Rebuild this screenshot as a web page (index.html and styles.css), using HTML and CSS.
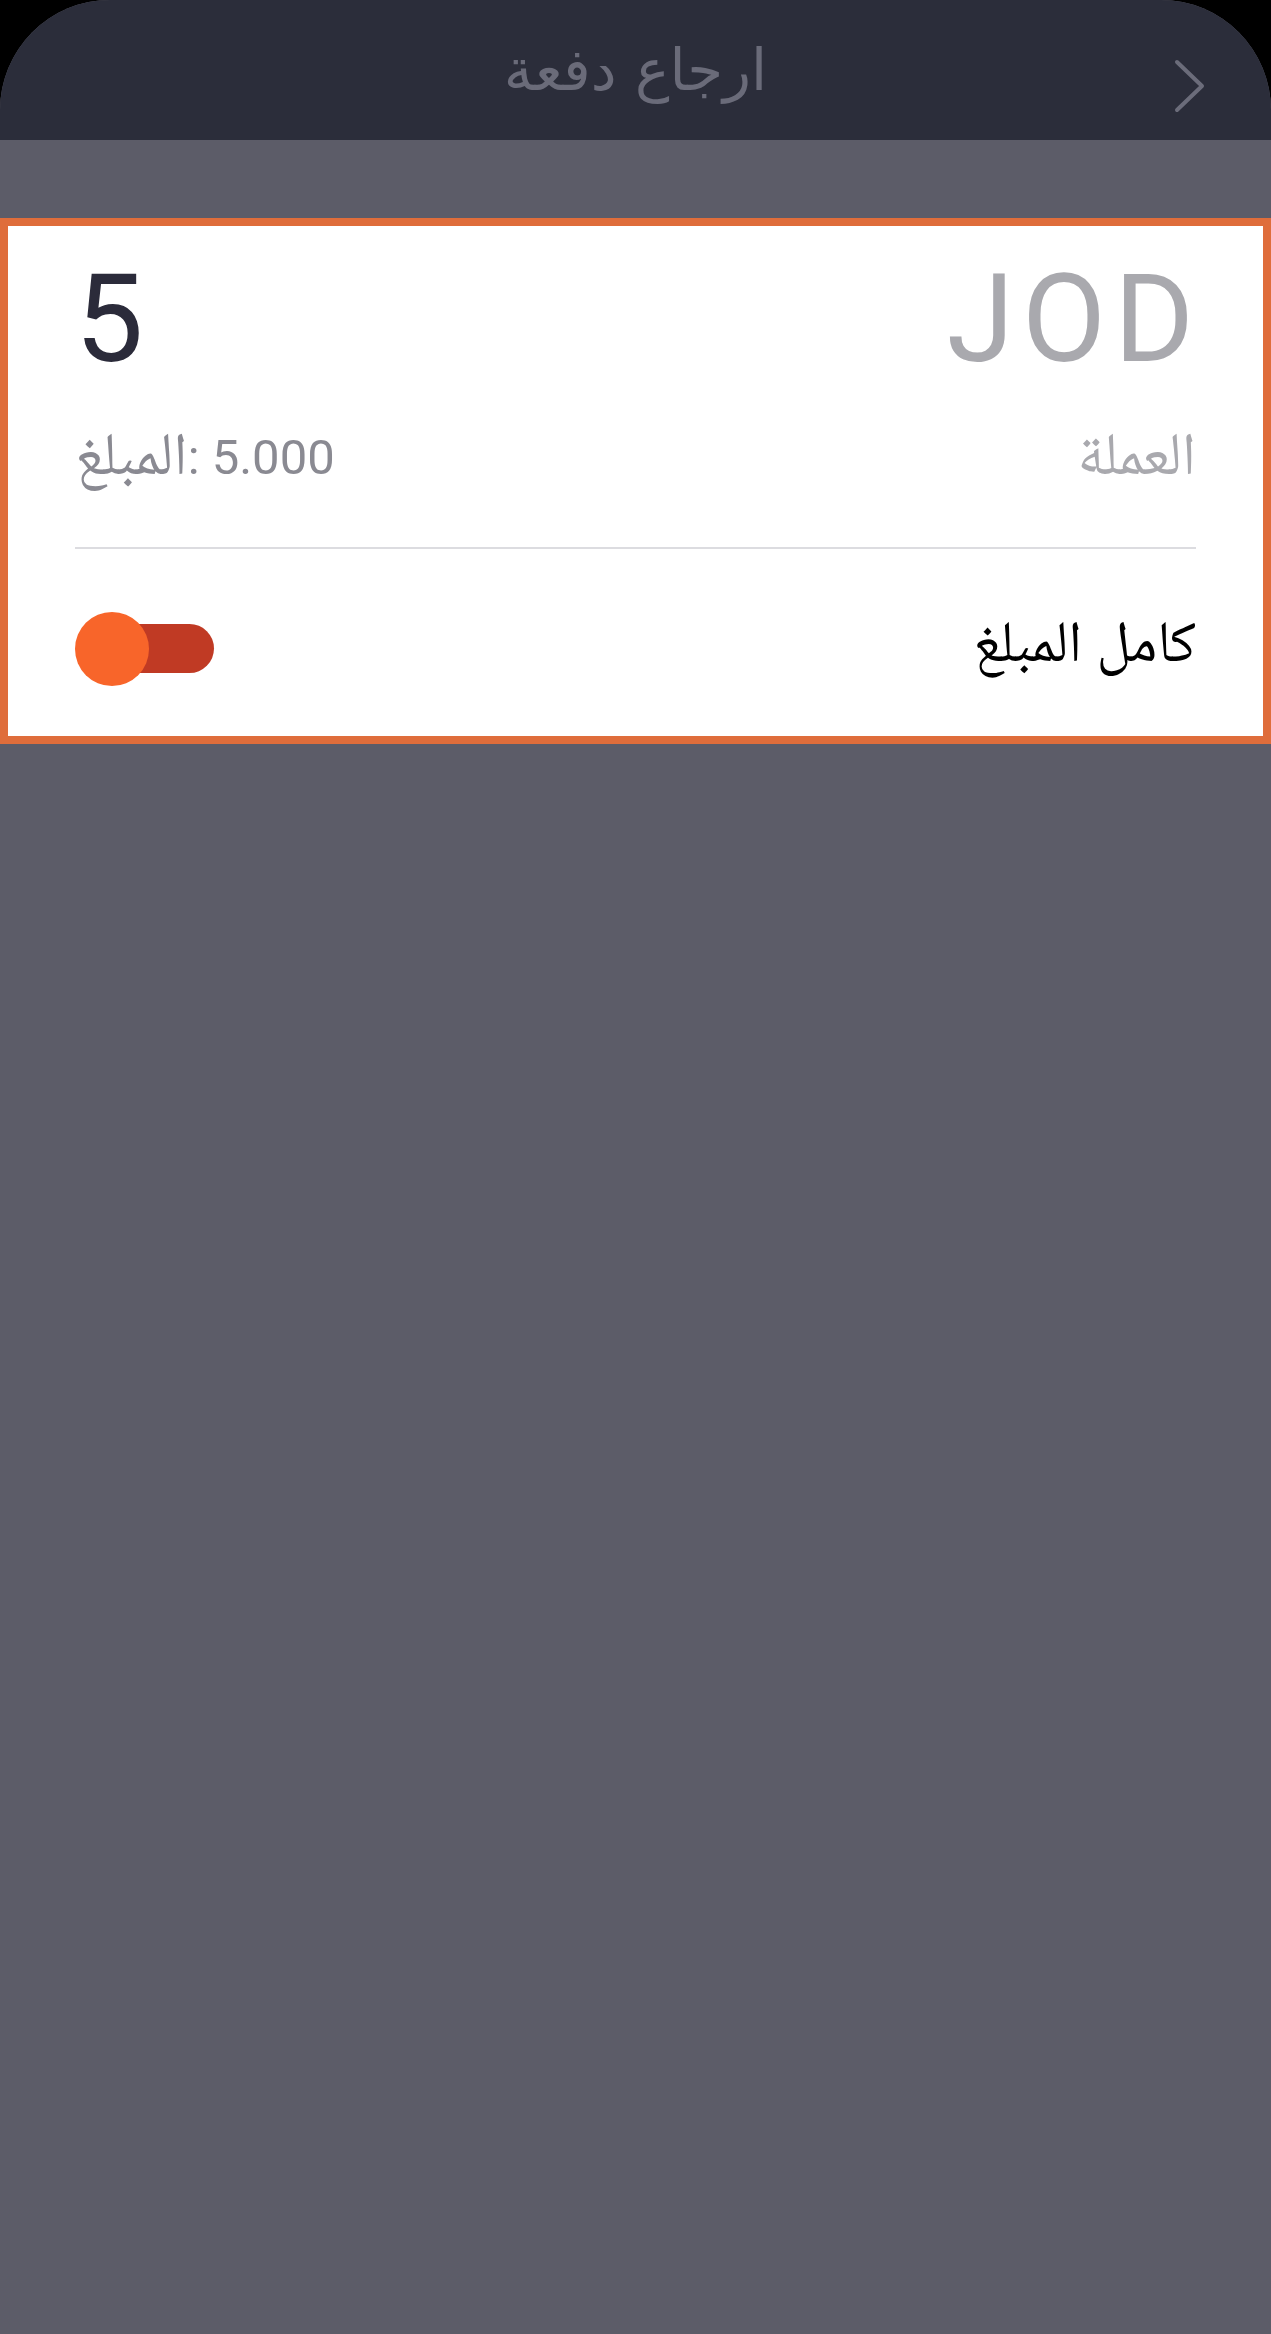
FILE: index.html
```html
<!DOCTYPE html>
<html dir="rtl" lang="ar">
<head>
    <title>ارجاع دفعة</title>
    <meta name="viewport" content="width=device-width, initial-scale=1.0">
    <link rel="stylesheet" href="styles.css">
</head>
<body>
    <div class="screen">
        <header class="top-bar">
            <h1 class="top-title">ارجاع دفعة</h1>
            <a class="back-button" href="#">
                <svg width="40" height="60" viewBox="0 0 40 60">
                    <path d="M8 7 L33 31 L8 55" fill="none" stroke="#6b6c7a" stroke-width="4" stroke-linecap="round" stroke-linejoin="round"/>
                </svg>
            </a>
        </header>

        <section class="refund-card">
            <div class="amount-row">
                <span class="currency">JOD</span>
                <span class="amount">5</span>
            </div>
            <div class="info-row">
                <span class="currency-label">العملة</span>
                <span class="amount-label">
                    <span class="amount-word">المبلغ</span>
                    <span class="amount-value">: 5.000</span>
                </span>
            </div>
            <div class="toggle-row">
                <span class="toggle-label">كامل المبلغ</span>
                <span class="toggle">
                    <span class="toggle-track"></span>
                    <span class="toggle-knob"></span>
                </span>
            </div>
        </section>
    </div>
</body>
</html>
```

FILE: styles.css
```css
html, body {
    margin: 0;
    padding: 0;
    background: #000;
}

body {
    font-family: Roboto, "Noto Naskh Arabic", "DejaVu Sans", sans-serif;
}

.screen {
    min-height: 2334px;
    background: #5c5c68;
    border-radius: 110px 110px 0 0;
    overflow: hidden;
}

.top-bar {
    position: relative;
    height: 140px;
    background: #2b2d3a;
    display: flex;
    align-items: center;
    justify-content: center;
}

.top-title {
    margin: 0;
    font-family: "DejaVu Sans", sans-serif;
    font-weight: normal;
    font-size: 58px;
    line-height: 1;
    color: #6a6b79;
}

.back-button {
    position: absolute;
    right: 62px;
    top: 55px;
    display: block;
    width: 40px;
    height: 60px;
}

.refund-card {
    margin-top: 78px;
    background: #fff;
    border: 8px solid #df6d3b;
    padding: 0 67px;
}

.amount-row {
    display: flex;
    justify-content: space-between;
    align-items: center;
    height: 172px;
    padding-top: 8px;
}

.currency,
.amount {
    font-size: 122px;
    line-height: 1;
}

.currency {
    color: #a9a9ae;
    letter-spacing: 8px;
    margin-right: -6px;
}

.amount {
    color: #2b2b3a;
}

.info-row {
    display: flex;
    justify-content: space-between;
    align-items: center;
    height: 110px;
    padding-bottom: 31px;
    border-bottom: 2px solid #dcdce0;
}

.currency-label {
    font-size: 60px;
    color: #a9a9ae;
}

.amount-label {
    display: flex;
    direction: ltr;
    align-items: baseline;
    color: #8a8a92;
}

.amount-word {
    font-size: 60px;
}

.amount-value {
    font-size: 49px;
    white-space: pre;
}

.toggle-row {
    display: flex;
    justify-content: space-between;
    align-items: center;
    height: 175px;
    padding-top: 12px;
}

.toggle-label {
    font-size: 58px;
    color: #000;
}

.toggle {
    position: relative;
    display: block;
    width: 140px;
    height: 74px;
}

.toggle-track {
    position: absolute;
    left: 2px;
    top: 12px;
    width: 137px;
    height: 49px;
    border-radius: 25px;
    background: #c03a24;
}

.toggle-knob {
    position: absolute;
    left: 0;
    top: 0;
    width: 74px;
    height: 74px;
    border-radius: 50%;
    background: #f8652a;
}
```
